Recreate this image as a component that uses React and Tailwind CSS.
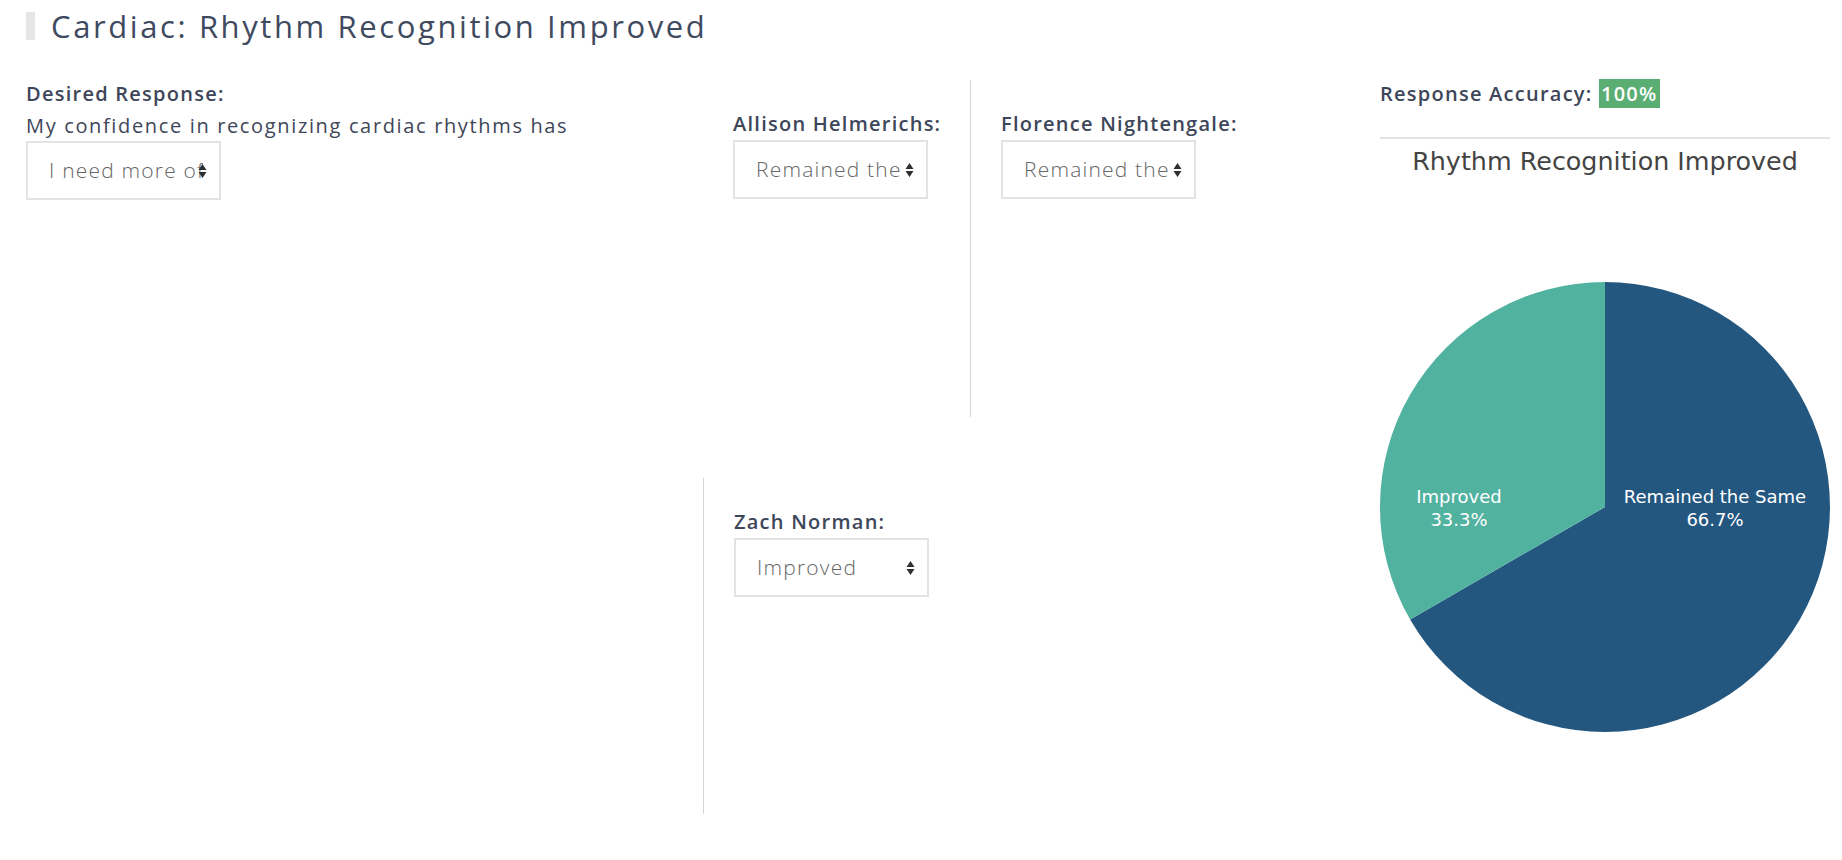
import React from 'react';

const Arrows = () => (
  <svg width="9" height="16" viewBox="0 0 9 16" className="absolute right-[12px] top-1/2 -translate-y-1/2">
    <path d="M4.5 1 L8.5 7 L0.5 7 Z" fill="#2f2f2f" />
    <path d="M0.5 9 L8.5 9 L4.5 15 Z" fill="#2f2f2f" />
  </svg>
);

const FakeSelect = ({ value }) => (
  <div className="relative w-[195px] h-[59px] border-2 border-[#e3e3e3] bg-white flex items-center">
    <span className="ml-[21px] w-[154px] overflow-hidden whitespace-nowrap text-[21px] font-light tracking-[1.2px] text-[#666]">
      {value}
    </span>
    <Arrows />
  </div>
);

const Responder = ({ name, value }) => (
  <div>
    <p className="text-[20px] leading-[32px] font-semibold tracking-[1.25px] text-[#3e4659]">{name}</p>
    <FakeSelect value={value} />
  </div>
);

const PieChart = () => (
  <svg width="450" height="450" viewBox="0 0 450 450">
    <path d="M225 225 L225 0 A225 225 0 1 1 30.14 337.5 Z" fill="#24577f" />
    <path d="M225 225 L30.14 337.5 A225 225 0 0 1 225 0 Z" fill="#52b2a0" />
    <g fill="#fff" fontFamily="'DejaVu Sans', Verdana, sans-serif" fontSize="18" textAnchor="middle">
      <text x="335" y="221">Remained the Same</text>
      <text x="335" y="244">66.7%</text>
      <text x="79" y="221">Improved</text>
      <text x="79" y="244">33.3%</text>
    </g>
  </svg>
);

export default function App() {
  return (
    <div className="w-[1842px] h-[860px] bg-white overflow-hidden font-['Open_Sans',sans-serif] text-[#3e4659]">
      {/* heading */}
      <div className="flex items-center gap-[16px] pl-[26px] pt-[12px] h-[40px]">
        <div className="w-[9px] h-[28px] bg-[#e6e6e6]" />
        <h1 className="text-[31px] leading-[28px] font-medium tracking-[2.6px] text-[#404a5f]">Cardiac: Rhythm Recognition Improved</h1>
      </div>

      <div className="flex pl-[26px] mt-[40px]">
        <div className="w-[1354px]">
          {/* row 1 */}
          <div className="flex h-[337px]">
            <div className="w-[677px] -mt-[2px]">
              <p className="text-[20px] leading-[32px] font-semibold tracking-[1.25px]">Desired Response:</p>
              <p className="text-[20px] leading-[32px] tracking-[1.65px]">My confidence in recognizing cardiac rhythms has</p>
              <div className="-mt-[1px]">
                <FakeSelect value="I need more of a refresher" />
              </div>
            </div>
            <div className="w-[267px] pl-[30px] pt-[28px]">
              <Responder name="Allison Helmerichs:" value="Remained the Same" />
            </div>
            <div className="border-l border-[#d6d6d6] pl-[30px] pt-[28px]">
              <Responder name="Florence Nightengale:" value="Remained the Same" />
            </div>
          </div>

          {/* row 2 */}
          <div className="flex h-[336px] mt-[61px]">
            <div className="w-[677px]" />
            <div className="border-l border-[#d6d6d6] pl-[30px] pt-[28px]">
              <Responder name="Zach Norman:" value="Improved" />
            </div>
          </div>
        </div>

        {/* chart column */}
        <div className="w-[450px] -mt-[2px]">
          <p className="text-[20px] leading-[32px] font-semibold tracking-[1.25px]">
            Response Accuracy:{' '}
            <span className="bg-[#5aad73] text-white px-[2px] py-[1px]">100%</span>
          </p>
          <div className="mt-[27px] h-[2px] bg-[#e4e4e4]" />
          <p className="text-center text-[25.4px] leading-[44px] text-[#444] font-['DejaVu_Sans',Verdana,sans-serif]">
            Rhythm Recognition Improved
          </p>
          <div className="mt-[99px]">
            <PieChart />
          </div>
        </div>
      </div>
    </div>
  );
}
